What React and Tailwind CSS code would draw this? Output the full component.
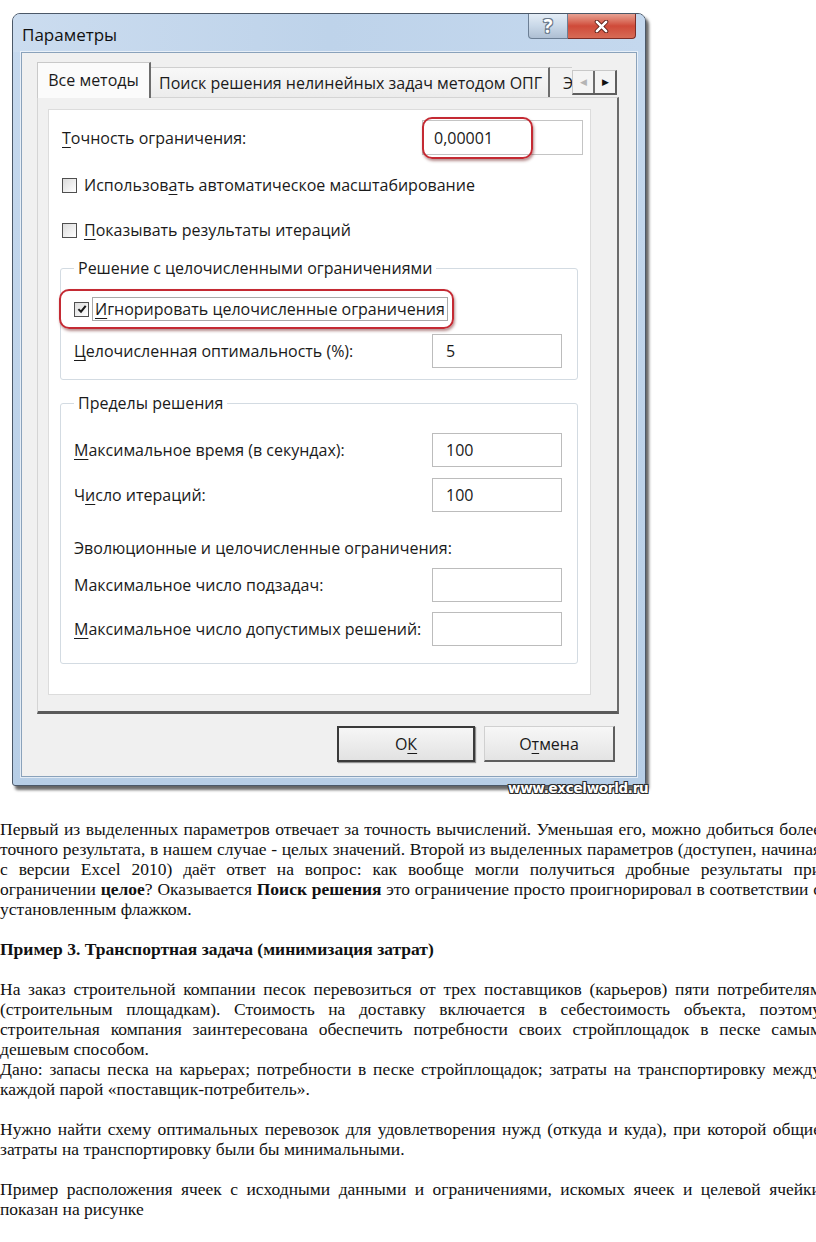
import React from 'react'

function U({ children }) {
  return <span className="underline decoration-1 underline-offset-[3px]">{children}</span>
}

function Box({ checked }) {
  return (
    <span className="flex h-[15px] w-[15px] shrink-0 items-center justify-center border border-[#4f4f4f] bg-gradient-to-br from-[#dcdcdc] to-white">
      {checked && (
        <svg viewBox="0 0 10 10" className="h-[10px] w-[10px]">
          <path d="M1.4 5.1 L4 7.7 L8.7 1.9" fill="none" stroke="#1a1a1a" strokeWidth="2" />
        </svg>
      )}
    </span>
  )
}

function Field({ value }) {
  return (
    <div className="flex h-[34px] w-[130px] shrink-0 items-center border border-[#bcbcbc] bg-white pl-[13px]">
      {value}
    </div>
  )
}

function Row({ label, value, className }) {
  return (
    <div className={`flex items-center justify-between pr-[15px] ${className}`}>
      <span>{label}</span>
      <Field value={value} />
    </div>
  )
}

function Highlight({ className }) {
  return (
    <div
      className={`pointer-events-none absolute rounded-[10px] border-2 border-[#c42a33] shadow-[1px_2px_3px_rgba(90,0,0,0.45)] ${className}`}
    />
  )
}

function TitleBar() {
  return (
    <div className="flex h-[38px] items-start justify-between bg-gradient-to-r from-[#cbdcef] via-[#bed3ea] to-[#c4d8ee]">
      <span className="mt-[8px] pl-[9px] text-[17px] text-[#111]">Параметры</span>
      <div className="mr-[9px] flex">
        <div className="flex h-[25px] w-[40px] items-center justify-center rounded-bl-[4px] border border-t-0 border-[#6c7f95] bg-gradient-to-b from-[#e4edf6] via-[#c9d8e8] to-[#aebfd3] text-[19px] font-bold leading-none text-white [text-shadow:_0_0_1px_#5a6a7c,1px_1px_0_#6a7a8c,-1px_-1px_0_#6a7a8c,1px_-1px_0_#6a7a8c,-1px_1px_0_#6a7a8c]">
          ?
        </div>
        <div className="flex h-[25px] w-[68px] items-center justify-center rounded-br-[4px] border border-l-0 border-t-0 border-[#7c2d26] bg-gradient-to-b from-[#e6a193] via-[#cf4a39] to-[#d76a55]">
          <svg viewBox="0 0 16 14" className="h-[13px] w-[15px]">
            <path d="M3 2 L13 12 M13 2 L3 12" stroke="#5a1f18" strokeWidth="4.6" strokeLinecap="round" />
            <path d="M3 2 L13 12 M13 2 L3 12" stroke="#fff" strokeWidth="2.8" strokeLinecap="round" />
          </svg>
        </div>
      </div>
    </div>
  )
}

function Tabs() {
  return (
    <div className="ml-[15px] mt-[9px] flex h-[35px] w-[582px] items-end">
      <div className="relative z-10 -mb-px flex h-[36px] w-[114px] items-center justify-center border-l border-t border-[#c9c9c9] border-r-2 border-r-[#6d6d6d] bg-[#fbfbfb] pb-[2px]">
        Все методы
      </div>
      <div className="flex h-[30px] w-[399px] items-center border-t border-[#cfcfcf] border-r-2 border-r-[#6d6d6d] bg-gradient-to-b from-[#f8f8f8] to-[#ececec] pl-[8px]">
        Поиск решения нелинейных задач методом ОПГ
      </div>
      <div className="flex h-[30px] w-[22px] items-center overflow-hidden border-t border-[#cfcfcf] bg-[#f2f2f2] pl-[13px]">
        Э
      </div>
      <div className="mb-[2px] flex h-[25px] w-[45px] border border-[#c8c8c8] border-b-2 border-r-2 border-b-[#5e5e5e] border-r-[#5e5e5e] bg-[#f4f4f4]">
        <div className="flex flex-1 items-center justify-center border-r-2 border-[#6d6d6d] text-[9px] text-[#b5b5b5]">◀</div>
        <div className="flex flex-1 items-center justify-center text-[9px] text-[#111]">▶</div>
      </div>
    </div>
  )
}

function Panel() {
  return (
    <div className="ml-[15px] h-[617px] w-[582px] border-l border-t border-[#d4d4d4] border-b-[3px] border-r-2 border-b-[#5a5a5a] border-r-[#6b6b6b] bg-[#f0f0f0] pl-[10px] pt-[11px]">
      <div className="h-[586px] w-[543px] border border-[#dcdcdc] bg-white">
        <div className="relative ml-[13px] mt-[10px] flex h-[35px] items-center">
          <span>
            <U>Т</U>очность ограничения:
          </span>
          <div className="relative ml-auto mr-[7px] flex h-[35px] w-[161px] items-center border border-[#c4c4c4] bg-white pl-[11px]">
            0,00001
            <Highlight className="-left-[1px] -top-[4px] h-[42px] w-[111px]" />
          </div>
        </div>

        <div className="ml-[13px] mt-[18px] flex h-[24px] items-center gap-[7px]">
          <Box />
          <span>
            Использов<U>а</U>ть автоматическое масштабирование
          </span>
        </div>
        <div className="ml-[13px] mt-[21px] flex h-[24px] items-center gap-[7px]">
          <Box />
          <span>
            <U>П</U>оказывать результаты итераций
          </span>
        </div>

        <fieldset className="ml-[11px] mt-[16px] w-[518px] rounded-[3px] border border-[#d3dbe2] pb-[11px] pl-[13px]">
          <legend className="px-[4px] leading-[20px]">Решение с целочисленными ограничениями</legend>
          <div className="relative mt-[19px] flex h-[24px] items-center gap-[3px]">
            <Box checked />
            <span className="border border-[#a9a9a9] px-[2px] leading-[22px]">
              <U>И</U>гнорировать целочисленные ограничения
            </span>
            <Highlight className="-left-[15px] -top-[8px] h-[40px] w-[395px]" />
          </div>
          <Row
            className="mt-[13px]"
            label={
              <>
                <U>Ц</U>елочисленная оптимальность (%):
              </>
            }
            value="5"
          />
        </fieldset>

        <fieldset className="ml-[11px] mt-[13px] w-[518px] rounded-[3px] border border-[#d3dbe2] pb-[17px] pl-[13px]">
          <legend className="px-[4px] leading-[20px]">Пределы решения</legend>
          <Row
            className="mt-[20px]"
            label={
              <>
                <U>М</U>аксимальное время (в секундах):
              </>
            }
            value="100"
          />
          <Row
            className="mt-[11px]"
            label={
              <>
                Ч<U>и</U>сло итераций:
              </>
            }
            value="100"
          />
          <div className="mt-[25px] leading-[22px]">Эволюционные и целочисленные ограничения:</div>
          <Row className="mt-[9px]" label="Максимальное число подзадач:" value="" />
          <Row
            className="mt-[10px]"
            label={
              <>
                <U>М</U>аксимальное число допустимых решений:
              </>
            }
            value=""
          />
        </fieldset>
      </div>
    </div>
  )
}

function Buttons() {
  return (
    <div className="mt-[12px] flex justify-end gap-[9px] pr-[21px]">
      <div className="flex h-[36px] w-[138px] items-center justify-center border-2 border-[#3a3a3a] bg-gradient-to-b from-[#f6f6f6] to-[#e2e2e2] shadow-[1px_1px_1px_rgba(0,0,0,0.4)]">
        О<U>К</U>
      </div>
      <div className="flex h-[36px] w-[131px] items-center justify-center border border-[#d0d0d0] border-b-2 border-r-2 border-b-[#5e5e5e] border-r-[#5e5e5e] bg-gradient-to-b from-[#f7f7f7] to-[#e4e4e4]">
        О<U>т</U>мена
      </div>
    </div>
  )
}

function Dialog() {
  return (
    <div className="flex h-[773px] w-[634px] flex-col overflow-hidden rounded-t-[8px] rounded-b-[3px] border border-[#4b5868] bg-gradient-to-b from-[#c6d9ee] to-[#b7cee6] font-['Open_Sans','Noto_Sans',sans-serif] text-[16px] text-[#1a1a1a] shadow-[3px_4px_3px_rgba(0,0,0,0.6)]">
      <TitleBar />
      <div className="mx-[8px] mb-[8px] flex-1 border border-[#8aa2bb] bg-[#f0f0f0] shadow-[0_0_0_1px_rgba(255,255,255,0.6)]">
        <Tabs />
        <Panel />
        <Buttons />
      </div>
    </div>
  )
}

function J({ children }) {
  return <div className="whitespace-nowrap text-justify [text-align-last:justify]">{children}</div>
}

function L({ children }) {
  return <div className="whitespace-nowrap">{children}</div>
}

function Gap() {
  return <div className="h-[20px]" />
}

export default function App() {
  return (
    <div className="relative h-[1242px] w-[816px] overflow-hidden bg-white">
      <div className="pl-[12px] pt-[13px]">
        <Dialog />
      </div>
      <div className="absolute left-[508px] top-[778px] font-['DejaVu_Sans',sans-serif] text-[13.5px] font-bold tracking-[-0.3px] text-white [text-shadow:_1px_1px_0_#2b2b2b,-1px_-1px_0_#2b2b2b,1px_-1px_0_#2b2b2b,-1px_1px_0_#2b2b2b]">
        www.excelworld.ru
      </div>

      <div className="mt-[33px] w-[821px] font-['Liberation_Serif','Times_New_Roman',serif] text-[17.5px] leading-[20px] text-[#111]">
        <J>Первый из выделенных параметров отвечает за точность вычислений. Уменьшая его, можно добиться более</J>
        <J>точного результата, в нашем случае - целых значений. Второй из выделенных параметров (доступен, начиная</J>
        <J>с версии Excel 2010) даёт ответ на вопрос: как вообще могли получиться дробные результаты при</J>
        <J>
          ограничении <b>целое</b>? Оказывается <b>Поиск решения</b> это ограничение просто проигнорировал в соответствии с
        </J>
        <L>установленным флажком.</L>
        <Gap />
        <L>
          <b>Пример 3. Транспортная задача (минимизация затрат)</b>
        </L>
        <Gap />
        <J>На заказ строительной компании песок перевозиться от трех поставщиков (карьеров) пяти потребителям</J>
        <J>(строительным площадкам). Стоимость на доставку включается в себестоимость объекта,  поэтому</J>
        <J>строительная компания заинтересована обеспечить потребности своих стройплощадок в песке самым</J>
        <L>дешевым способом.</L>
        <J>Дано: запасы песка на карьерах; потребности в песке стройплощадок; затраты на транспортировку между</J>
        <L>каждой парой «поставщик-потребитель».</L>
        <Gap />
        <J>Нужно найти схему оптимальных перевозок для удовлетворения нужд (откуда и куда), при которой общие</J>
        <L>затраты на транспортировку были бы минимальными.</L>
        <Gap />
        <J>Пример расположения ячеек с исходными данными и ограничениями, искомых ячеек и целевой ячейки</J>
        <L>показан на рисунке</L>
      </div>
    </div>
  )
}
